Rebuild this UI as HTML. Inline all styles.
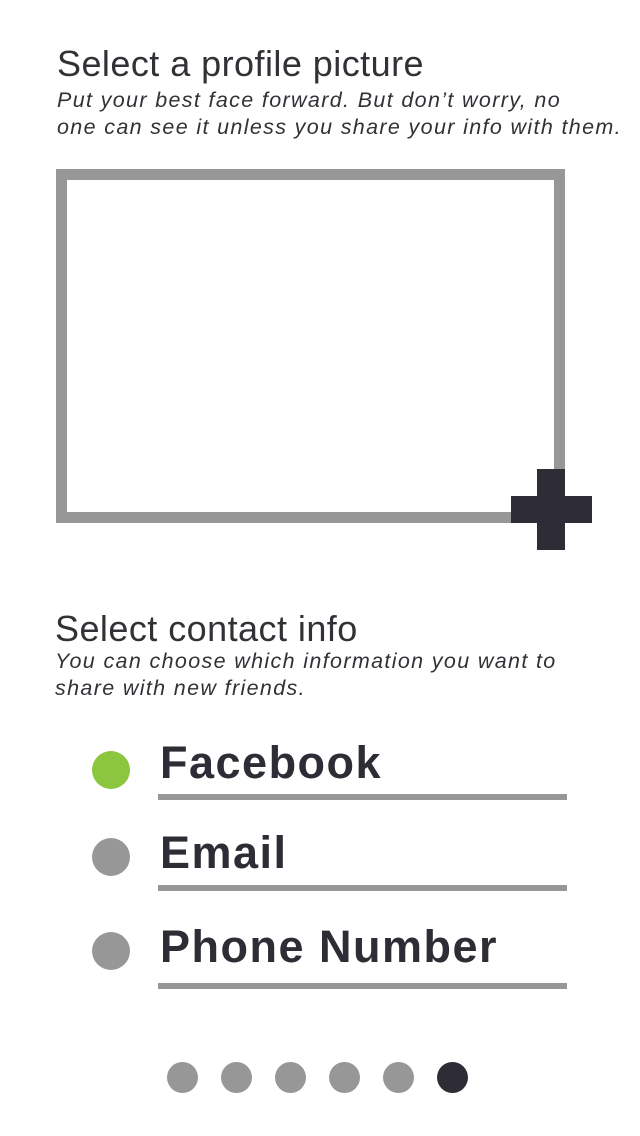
<!DOCTYPE html>
<html><head><style>
body{margin:0;width:640px;height:1136px;background:#fff;position:relative;overflow:hidden;font-family:"Liberation Sans",sans-serif;color:#333036}
.a{position:absolute;white-space:nowrap}
.h{font-size:36px;letter-spacing:0.45px}
.s{font-size:21.5px;font-style:italic;line-height:27px;letter-spacing:1.35px}
.box{position:absolute;left:56px;top:169px;width:487px;height:332px;border:11px solid #979797}
.bar{position:absolute;background:#2e2d36}
.dot{position:absolute;width:38px;height:38px;border-radius:50%;background:#979797;left:92px}
.lbl{position:absolute;left:160px;font-size:45px;font-weight:bold;color:#2e2d36;line-height:50px;letter-spacing:1.5px}
.ul{position:absolute;left:158px;width:409px;height:6px;background:#979797}
.pg{position:absolute;top:1062px;width:31px;height:31px;border-radius:50%;background:#979797}
</style></head><body>
<div class="a h" style="left:57px;top:43px">Select a profile picture</div>
<div class="a s" style="left:57px;top:87px">Put your best face forward. But don’t worry, no<br>one can see it unless you share your info with them.</div>
<div class="box"></div>
<div class="bar" style="left:511px;top:496px;width:81px;height:27px"></div>
<div class="bar" style="left:537px;top:469px;width:28px;height:81px"></div>
<div class="a h" style="left:55px;top:608px">Select contact info</div>
<div class="a s" style="left:55px;top:648px">You can choose which information you want to<br>share with new friends.</div>
<div class="dot" style="top:751px;background:#8cc63f"></div>
<div class="lbl" style="top:738px">Facebook</div>
<div class="ul" style="top:794px"></div>
<div class="dot" style="top:838px"></div>
<div class="lbl" style="top:828px">Email</div>
<div class="ul" style="top:885px"></div>
<div class="dot" style="top:932px"></div>
<div class="lbl" style="top:922px">Phone Number</div>
<div class="ul" style="top:983px"></div>
<div class="pg" style="left:167px"></div>
<div class="pg" style="left:221px"></div>
<div class="pg" style="left:275px"></div>
<div class="pg" style="left:329px"></div>
<div class="pg" style="left:383px"></div>
<div class="pg" style="left:437px;background:#2e2d36"></div>
</body></html>
